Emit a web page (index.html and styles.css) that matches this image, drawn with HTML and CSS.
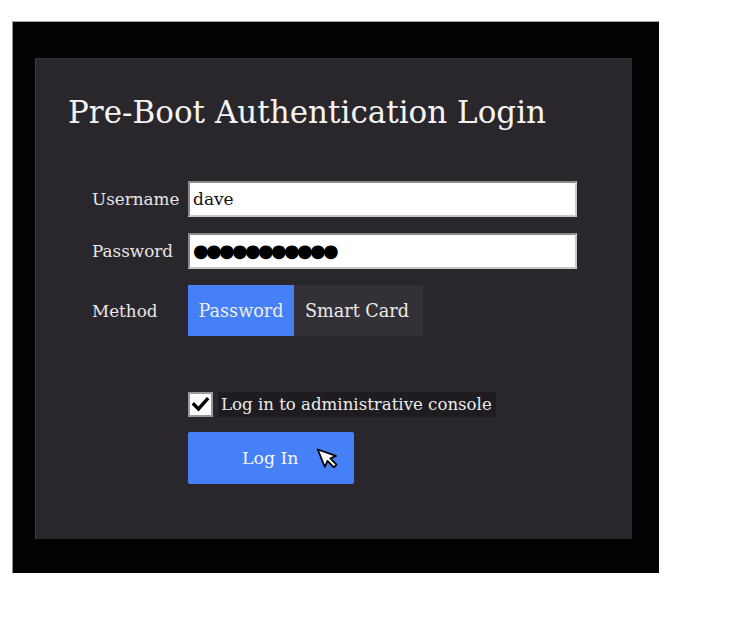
FILE: index.html
```html
<!DOCTYPE html>
<html>
<head>
<meta charset="utf-8">
<link rel="stylesheet" href="styles.css">
</head>
<body>
<div class="screen">
  <div class="panel">
    <h1 class="title">Pre-Boot Authentication Login</h1>
    <div class="form">
      <div class="label">Username</div>
      <div class="field">dave</div>
      <div class="label">Password</div>
      <div class="field dots">●●●●●●●●●●●</div>
      <div class="label">Method</div>
      <div class="segment">
        <div class="seg active">Password</div>
        <div class="seg">Smart Card</div>
      </div>
    </div>
    <div class="actions">
      <div class="check-row">
        <div class="checkbox">
          <svg width="21" height="21" viewBox="0 0 21 21"><path d="M4 10.5 L8.5 15 L17 5.5" fill="none" stroke="#000" stroke-width="3.4" stroke-linecap="square"/></svg>
        </div>
        <div class="check-label">Log in to administrative console</div>
      </div>
      <div class="login-btn">
        <span>Log In</span>
        <svg class="cursor" width="28" height="30" viewBox="0 0 22 24"><path d="M2 2 L2 17 L5.8 13.4 L8.6 20 L11.4 18.8 L8.6 12.4 L13.6 12.2 Z" transform="rotate(-22 2 2)" fill="#fff" stroke="#000" stroke-width="1.4" stroke-linejoin="round"/></svg>
      </div>
    </div>
  </div>
</div>
</body>
</html>
```

FILE: styles.css
```css
html, body {
  margin: 0;
  padding: 0;
  background: #ffffff;
}
body {
  font-family: "DejaVu Serif", serif;
}
.screen {
  margin: 21px 0 0 12px;
  width: 647px;
  height: 552px;
  box-sizing: border-box;
  background: #020104;
  border-top: 1px solid #a9a9a9;
  border-left: 1px solid #8e8e8e;
  padding: 36px 0 0 22px;
}
.panel {
  width: 597px;
  height: 481px;
  box-sizing: border-box;
  background: #29272c;
  border-left: 1px solid #3e3c41;
  border-top: 1px solid #323035;
  padding: 35px 0 0 32px;
}
.title {
  margin: 0;
  font-weight: normal;
  font-size: 31px;
  line-height: 36px;
  color: #f4f4f4;
}
.form {
  margin-top: 51px;
  margin-left: 24px;
  display: grid;
  grid-template-columns: 96px 389px;
  row-gap: 16px;
  align-items: center;
}
.label {
  color: #e6e6e6;
  font-size: 16.8px;
}
.field {
  height: 36px;
  box-sizing: border-box;
  background: #ffffff;
  border-top: 2px solid #8a8a8a;
  border-left: 2px solid #8a8a8a;
  border-right: 2px solid #c8c8c8;
  border-bottom: 2px solid #c8c8c8;
  color: #111;
  font-size: 17px;
  line-height: 32px;
  padding-left: 3px;
}
.dots {
  font-family: "DejaVu Sans", sans-serif;
  font-size: 18px;
  letter-spacing: -2.7px;
  color: #000;
}
.segment {
  display: flex;
  height: 51px;
  width: 235px;
  background: #343136;
}
.seg {
  display: flex;
  align-items: center;
  justify-content: center;
  color: #ececec;
  font-size: 17.6px;
  padding: 0 11px;
}
.seg.active {
  background: #4680f6;
  width: 106px;
  box-sizing: border-box;
  padding: 0;
}
.actions {
  margin-left: 120px;
  margin-top: 56px;
  display: flex;
  flex-direction: column;
  gap: 15px;
}
.check-row {
  display: flex;
  align-items: center;
  height: 25px;
}
.checkbox {
  width: 25px;
  height: 25px;
  box-sizing: border-box;
  background: #fff;
  border: 2px solid #9a9a9a;
  display: flex;
  align-items: center;
  justify-content: center;
}
.check-label {
  margin-left: 5px;
  height: 25px;
  line-height: 25px;
  background: #1e1c20;
  color: #ececec;
  font-size: 16.6px;
  padding: 0 4px 0 3px;
}
.login-btn {
  position: relative;
  width: 166px;
  height: 52px;
  background: #4680f6;
  border-radius: 2px;
  color: #f4f6ff;
  font-size: 17.3px;
  display: flex;
  align-items: center;
  padding-left: 54px;
  box-sizing: border-box;
}
.cursor {
  position: absolute;
  left: 127px;
  top: 15px;
}
```
